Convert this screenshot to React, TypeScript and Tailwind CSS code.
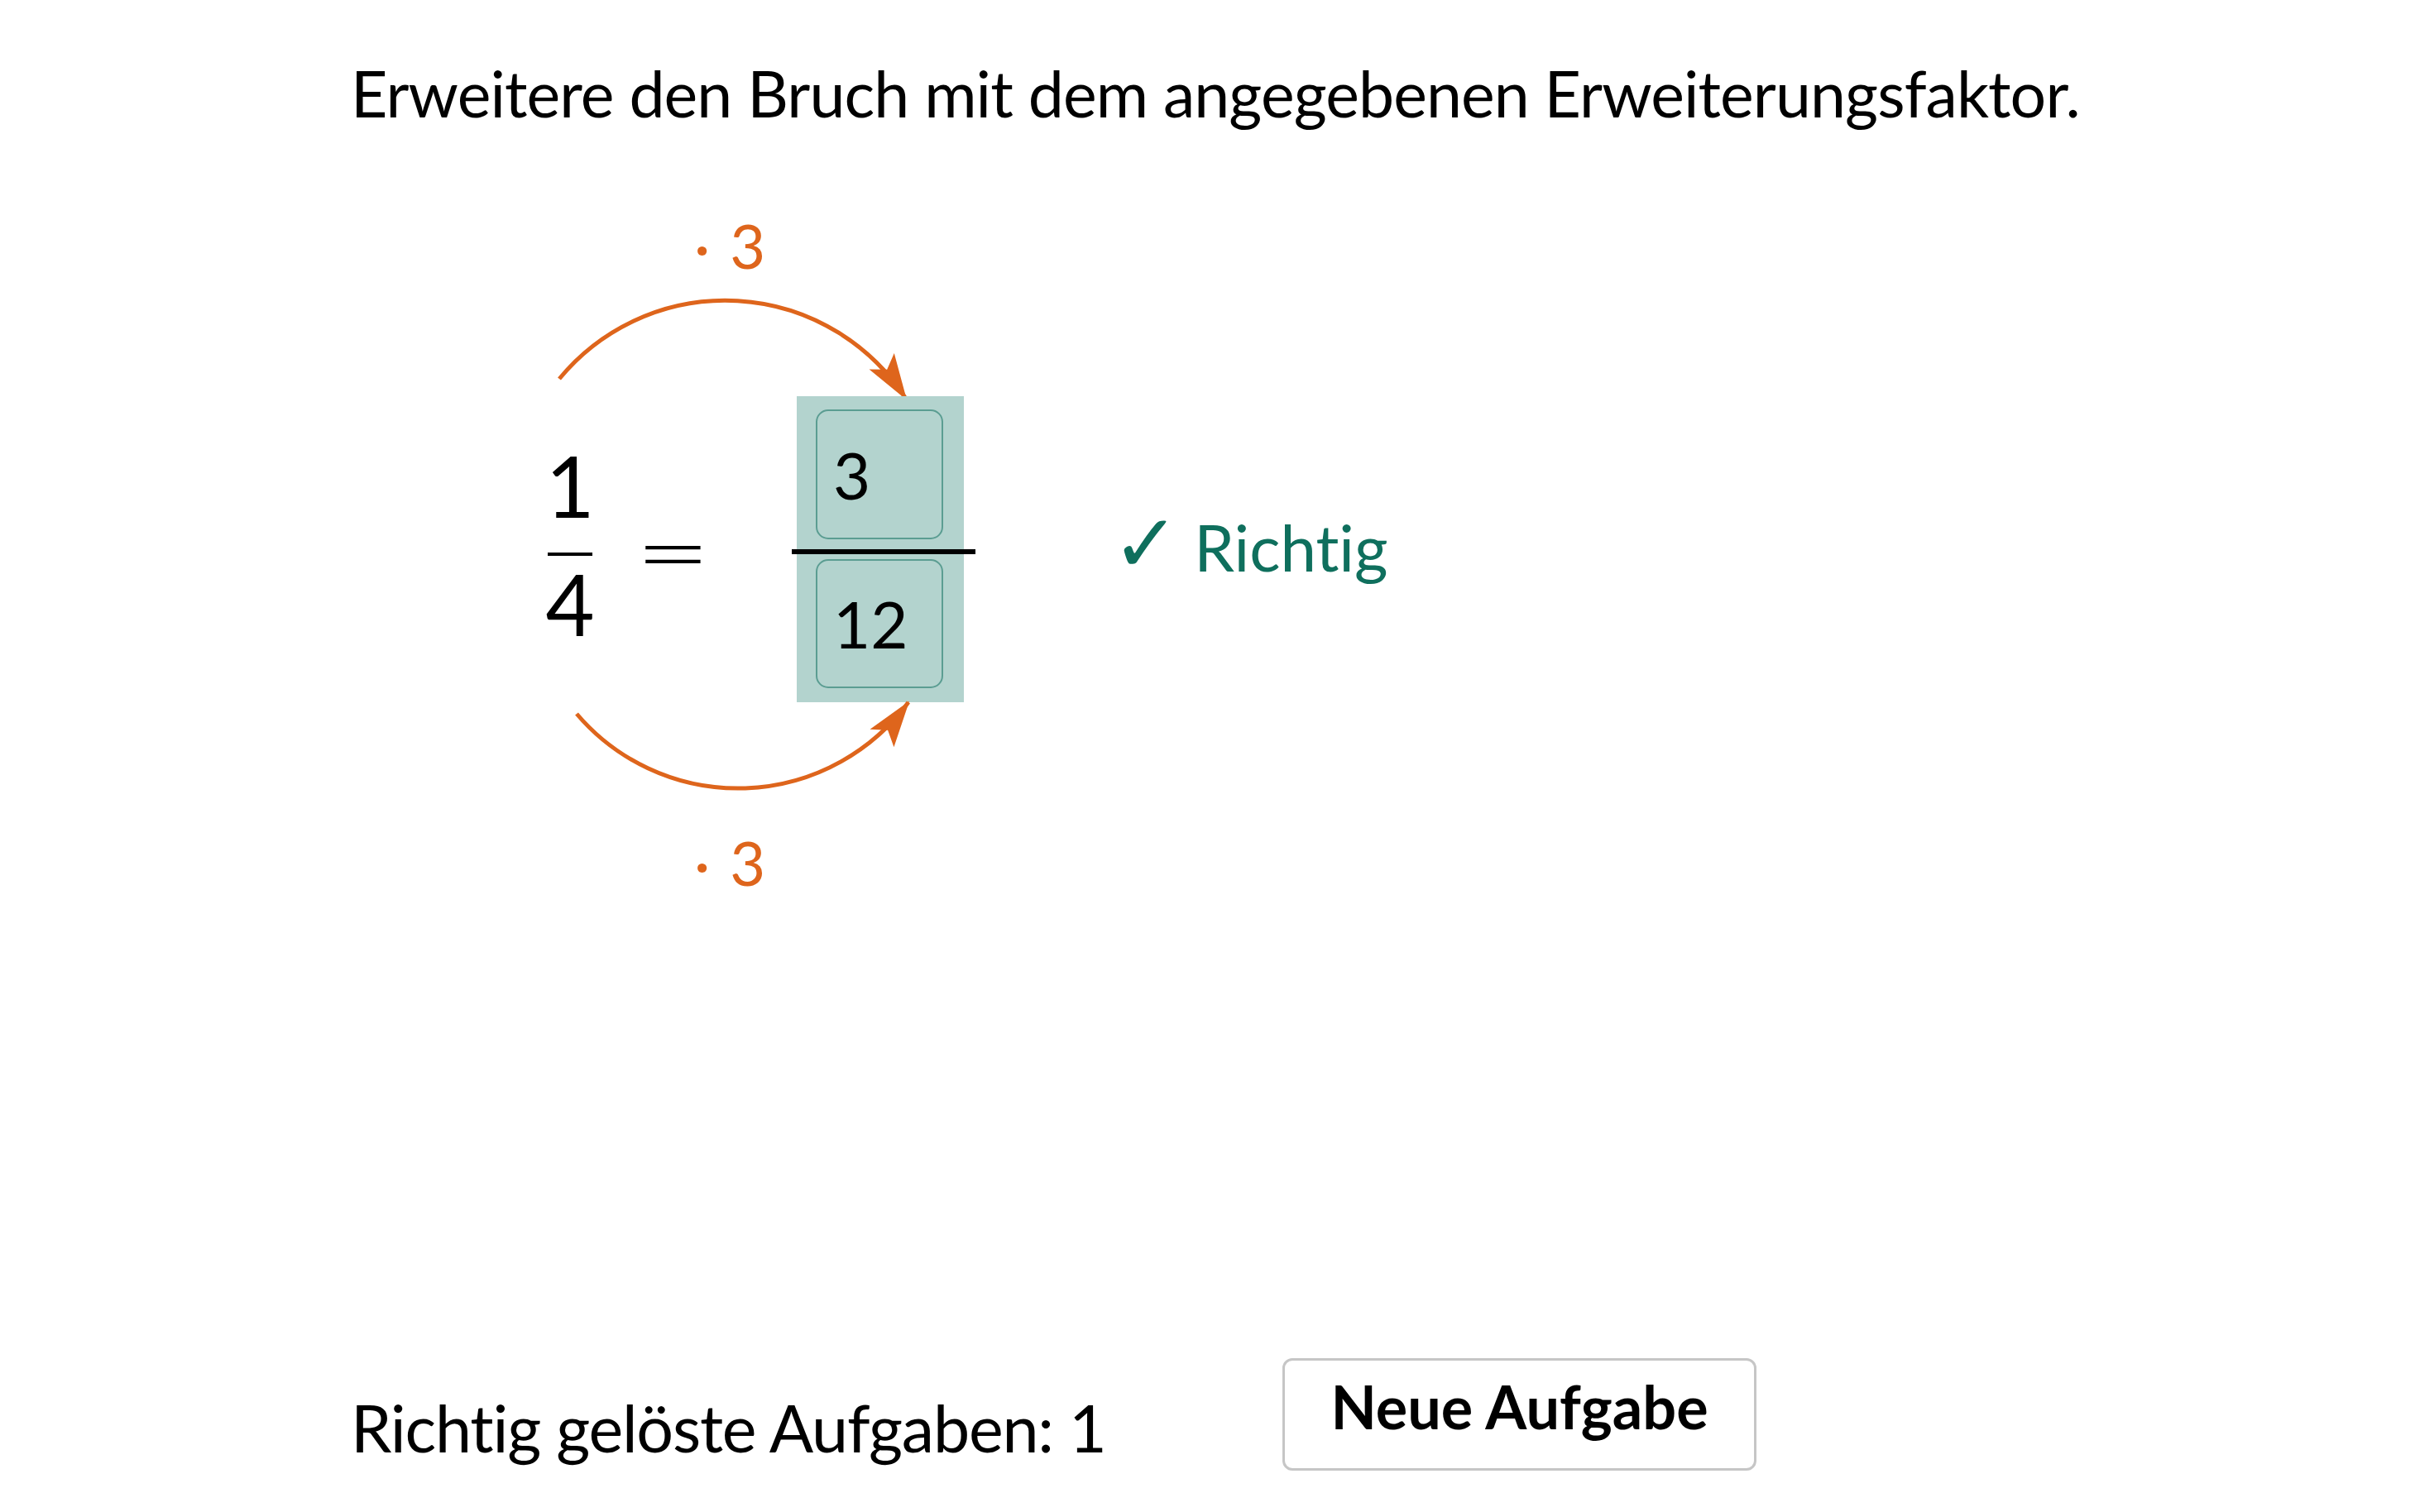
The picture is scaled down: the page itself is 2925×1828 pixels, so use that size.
import { useState } from "react";

const ORANGE = "#de651c";

function ArcTop() {
  return (
    <svg width="500" height="130" viewBox="0 0 500 130" className="overflow-visible">
      <defs>
        <marker
          id="arrow-top"
          markerUnits="userSpaceOnUse"
          markerWidth="56"
          markerHeight="40"
          refX="54"
          refY="20"
          orient="auto"
        >
          <path d="M0 2 L56 20 L0 38 L12 20 Z" fill={ORANGE} />
        </marker>
      </defs>
      <path
        d="M36 108 A260 260 0 0 1 455 132"
        stroke={ORANGE}
        strokeWidth="5"
        fill="none"
        markerEnd="url(#arrow-top)"
      />
    </svg>
  );
}

function ArcBottom() {
  return (
    <svg width="500" height="120" viewBox="0 0 500 120" className="overflow-visible">
      <defs>
        <marker
          id="arrow-bottom"
          markerUnits="userSpaceOnUse"
          markerWidth="56"
          markerHeight="40"
          refX="54"
          refY="20"
          orient="auto"
        >
          <path d="M0 2 L56 20 L0 38 L12 20 Z" fill={ORANGE} />
        </marker>
      </defs>
      <path
        d="M57 18 A256 256 0 0 0 458 4"
        stroke={ORANGE}
        strokeWidth="5"
        fill="none"
        markerEnd="url(#arrow-bottom)"
      />
    </svg>
  );
}

function AnswerInput({ value }: { value: string }) {
  return (
    <input
      readOnly
      value={value}
      className="h-full w-full rounded-[15px] border-2 border-[#5b9d92] bg-transparent pl-[19px] text-[78px] leading-none text-black outline-none"
    />
  );
}

function Factor() {
  return (
    <div className="ml-[199px] flex text-[74px] leading-[89px] text-[#de651c]">
      <span>·</span>
      <span className="ml-[24px]">3</span>
    </div>
  );
}

export default function App() {
  const [solved] = useState(1);

  return (
    <div className="min-h-screen bg-white pl-[424px] pt-[66px] font-['Lato','Noto_Sans',sans-serif] text-black [font-variant-ligatures:none]">
      <h1 className="text-[77px] font-normal leading-[92px] tracking-[-0.9px]">
        Erweitere den Bruch mit dem angegebenen Erweiterungsfaktor.
      </h1>

      <div className="ml-[216px] mt-[94px] flex flex-col">
        <Factor />
        <div className="mt-[9px] h-[130px]">
          <ArcTop />
        </div>

        <div className="-mt-px flex items-start">
          {/* given fraction */}
          <div className="ml-[22px] mt-[68px] flex w-[54px] flex-col items-center">
            <span className="text-[102px] leading-[80px]">1</span>
            <div className="mt-[41px] h-[4px] w-[54px] bg-black" />
            <span className="mt-[18px] text-[102px] leading-[80px]">4</span>
          </div>

          <div className="ml-[62px] mt-[136px] flex w-[71px] justify-center font-['DejaVu_Sans',sans-serif] text-[106px] font-extralight leading-[106px]">
            =
          </div>

          {/* answer fraction */}
          <div className="ml-[114px] flex w-[202px] flex-col bg-[#b3d3ce] pb-[17px] pl-[23px] pr-[25px] pt-[16px]">
            <div className="h-[157px]">
              <AnswerInput value="3" />
            </div>
            <div className="-ml-[29px] -mr-[39px] mb-[6px] mt-[12px] h-[6px] bg-black" />
            <div className="h-[156px]">
              <AnswerInput value="12" />
            </div>
          </div>

          <div className="ml-[179px] mt-[131px] flex items-baseline text-[78px] leading-[94px] text-[#0f6f5d]">
            <span className="mr-[17px] font-['DejaVu_Sans',sans-serif] text-[98px] leading-[94px]">✓</span>
            <span>Richtig</span>
          </div>
        </div>

        <div className="-mt-[4px] h-[120px]">
          <ArcBottom />
        </div>
        <div className="mt-[33px]">
          <Factor />
        </div>
      </div>

      <div className="mt-[555px] flex items-start">
        <div className="mt-[36px] w-[1126px] text-[79px] leading-[95px] tracking-[-1.2px]">
          Richtig gelöste Aufgaben: {solved}
        </div>
        <button
          type="button"
          className="flex h-[136px] w-[573px] items-center justify-center rounded-[12px] border-[3px] border-[#c6c6c6] bg-white pb-[20px] text-[72px] font-bold leading-[84px] text-black"
        >
          Neue Aufgabe
        </button>
      </div>
    </div>
  );
}
